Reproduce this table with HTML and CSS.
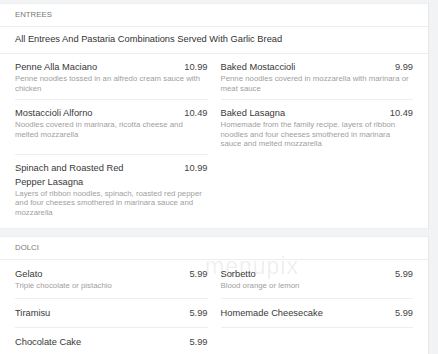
FILE: index.html
```html
<!DOCTYPE html>
<html lang="en">
<head>
<meta charset="utf-8">
<title>Menu</title>
<link rel="stylesheet" href="styles.css">
</head>
<body>
<div class="page">
  <section class="card">
    <div class="card-header">ENTREES</div>
    <div class="card-note">All Entrees And Pastaria Combinations Served With Garlic Bread</div>
    <div class="items">
      <div class="item">
        <div class="item-top"><span class="name">Penne Alla Maciano</span><span class="price">10.99</span></div>
        <div class="desc">Penne noodles tossed in an alfredo cream sauce with chicken</div>
      </div>
      <div class="item">
        <div class="item-top"><span class="name">Baked Mostaccioli</span><span class="price">9.99</span></div>
        <div class="desc">Penne noodles covered in mozzarella with marinara or meat sauce</div>
      </div>
      <div class="item">
        <div class="item-top"><span class="name">Mostaccioli Alforno</span><span class="price">10.49</span></div>
        <div class="desc">Noodles covered in marinara, ricotta cheese and melted mozzarella</div>
      </div>
      <div class="item last">
        <div class="item-top"><span class="name">Baked Lasagna</span><span class="price">10.49</span></div>
        <div class="desc">Homemade from the family recipe. layers of ribbon noodles and four cheeses smothered in marinara<br>sauce and melted mozzarella</div>
      </div>
      <div class="item last">
        <div class="item-top"><span class="name">Spinach and Roasted Red Pepper Lasagna</span><span class="price">10.99</span></div>
        <div class="desc">Layers of ribbon noodles, spinach, roasted red pepper and four cheeses smothered in marinara sauce and mozzarella</div>
      </div>
    </div>
  </section>

  <section class="card card-dolci">
    <div class="card-header">DOLCI</div>
    <div class="items">
      <div class="item">
        <div class="item-top"><span class="name">Gelato</span><span class="price">5.99</span></div>
        <div class="desc">Triple chocolate or pistachio</div>
      </div>
      <div class="item">
        <div class="item-top"><span class="name">Sorbetto</span><span class="price">5.99</span></div>
        <div class="desc">Blood orange or lemon</div>
      </div>
      <div class="item">
        <div class="item-top"><span class="name">Tiramisu</span><span class="price">5.99</span></div>
      </div>
      <div class="item">
        <div class="item-top"><span class="name">Homemade Cheesecake</span><span class="price">5.99</span></div>
      </div>
      <div class="item last">
        <div class="item-top"><span class="name">Chocolate Cake</span><span class="price">5.99</span></div>
      </div>
    </div>
    <div class="watermark" aria-hidden="true">menupix</div>
  </section>
</div>
</body>
</html>
```

FILE: styles.css
```css
html, body {
  margin: 0;
  padding: 0;
}

body {
  background: #f2f3f5;
  font-family: "Liberation Sans", Arial, sans-serif;
  color: #333;
}

.page {
  width: 429px;
  padding-top: 3px;
  display: flex;
  flex-direction: column;
  gap: 7px;
}

.card {
  position: relative;
  background: #fff;
  border-right: 1px solid #e6e7ea;
  border-top: 1px solid #eceef0;
  border-bottom: 1px solid #eceef0;
  padding-bottom: 5px;
}

.card-header {
  padding: 5px 15px;
  font-size: 7.8px;
  line-height: 12px;
  color: #777;
  border-bottom: 1px solid #eeeeee;
}

.card-note {
  padding: 5px 15px 7px;
  font-size: 9.3px;
  line-height: 14px;
  color: #333;
  border-bottom: 1px solid #eeeeee;
}

.items {
  display: grid;
  grid-template-columns: 1fr 1fr;
  column-gap: 13px;
  padding: 0 15px;
}

.item {
  padding: 6px 0;
  border-bottom: 1px solid #eeeeee;
}

.item.last {
  border-bottom: none;
}

.card-dolci .item {
  padding: 7px 0 7px;
}

.item-top {
  display: flex;
  justify-content: space-between;
  align-items: flex-start;
  font-size: 9.3px;
  line-height: 14px;
  color: #383838;
}

.name {
  flex: 0 1 125px;
}

.price {
  flex-shrink: 0;
  color: #444;
}

.desc {
  font-size: 7.8px;
  line-height: 9.5px;
  color: #a0a0a0;
}

.watermark {
  position: absolute;
  left: 205px;
  top: 16px;
  font-size: 23px;
  letter-spacing: 1px;
  color: rgba(0, 0, 0, 0.08);
  pointer-events: none;
}
```
